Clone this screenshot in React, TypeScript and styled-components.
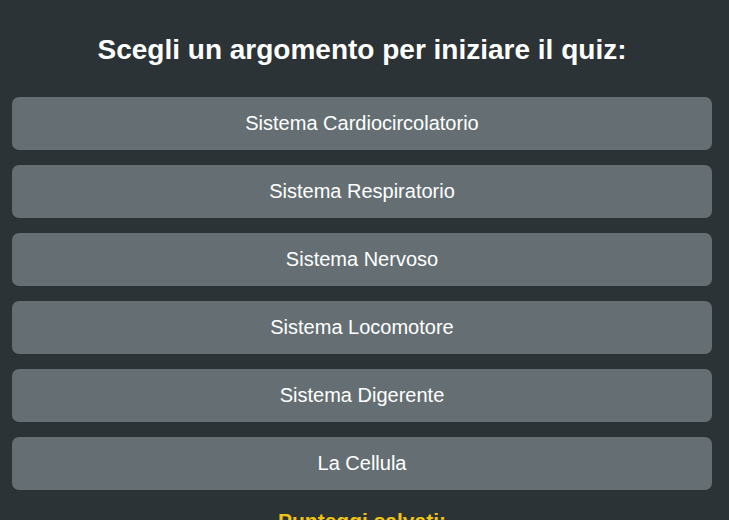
import React from "react";
import styled, { createGlobalStyle } from "styled-components";

const GlobalStyle = createGlobalStyle`
  html, body {
    margin: 0;
    padding: 0;
    background: #2c3336;
    font-family: "Liberation Sans", Arial, sans-serif;
    color: #ffffff;
  }
`;

const Page = styled.main`
  width: 700px;
  margin: 0 12px;
  padding-top: 34px;
  display: flex;
  flex-direction: column;
  align-items: stretch;
`;

const Title = styled.h2`
  margin: 0 0 31px;
  font-size: 28px;
  line-height: 32px;
  font-weight: bold;
  text-align: center;
  color: #ffffff;
`;

const TopicList = styled.div`
  display: flex;
  flex-direction: column;
  gap: 15px;
`;

const TopicButton = styled.button`
  height: 53px;
  border: none;
  border-radius: 7px;
  background: #656f73;
  color: #ffffff;
  font-family: "Liberation Sans", Arial, sans-serif;
  font-size: 20px;
  cursor: pointer;
  text-align: center;
`;

const ScoresTitle = styled.h3`
  margin: 19px 0 0;
  font-size: 21px;
  font-weight: bold;
  text-align: center;
  color: #f1c40f;
`;

const topics = [
  "Sistema Cardiocircolatorio",
  "Sistema Respiratorio",
  "Sistema Nervoso",
  "Sistema Locomotore",
  "Sistema Digerente",
  "La Cellula",
];

export default function App() {
  return (
    <>
      <GlobalStyle />
      <Page>
        <Title>Scegli un argomento per iniziare il quiz:</Title>
        <TopicList>
          {topics.map((t) => (
            <TopicButton key={t}>{t}</TopicButton>
          ))}
        </TopicList>
        <ScoresTitle>Punteggi salvati:</ScoresTitle>
      </Page>
    </>
  );
}
